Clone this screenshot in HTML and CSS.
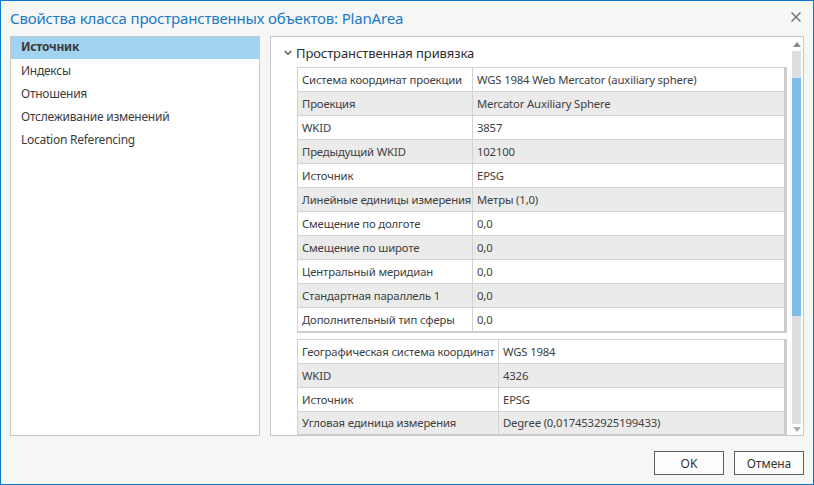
FILE: index.html
```html
<!DOCTYPE html>
<html lang="ru">
<head>
<meta charset="utf-8">
<title>Свойства класса пространственных объектов</title>
<link rel="stylesheet" href="styles.css">
</head>
<body>
<div class="window">
  <div class="titlebar">
    <div class="title">Свойства класса пространственных объектов: PlanArea</div>
    <svg class="close" width="10" height="10" viewBox="0 0 10 10"><path d="M0.5 0.5L9.5 9.5M9.5 0.5L0.5 9.5" stroke="#6b6b6b" stroke-width="1.3" fill="none"/></svg>
  </div>
  <div class="main">
    <div class="nav">
      <div class="nav-item selected">Источник</div>
      <div class="nav-item">Индексы</div>
      <div class="nav-item">Отношения</div>
      <div class="nav-item">Отслеживание изменений</div>
      <div class="nav-item">Location Referencing</div>
    </div>
    <div class="panel">
      <div class="content">
        <div class="section-head">
          <svg class="chev" width="8" height="6" viewBox="0 0 8 6"><path d="M0.8 1L4 4.2L7.2 1" stroke="#555" stroke-width="1.5" fill="none"/></svg>
          <span>Пространственная привязка</span>
        </div>
        <table class="grid g1">
          <tr><td class="k">Система координат проекции</td><td>WGS 1984 Web Mercator (auxiliary sphere)</td></tr>
          <tr class="alt"><td class="k">Проекция</td><td>Mercator Auxiliary Sphere</td></tr>
          <tr><td class="k">WKID</td><td>3857</td></tr>
          <tr class="alt"><td class="k">Предыдущий WKID</td><td>102100</td></tr>
          <tr><td class="k">Источник</td><td>EPSG</td></tr>
          <tr class="alt"><td class="k">Линейные единицы измерения</td><td>Метры (1,0)</td></tr>
          <tr><td class="k">Смещение по долготе</td><td>0,0</td></tr>
          <tr class="alt"><td class="k">Смещение по широте</td><td>0,0</td></tr>
          <tr><td class="k">Центральный меридиан</td><td>0,0</td></tr>
          <tr class="alt"><td class="k">Стандартная параллель 1</td><td>0,0</td></tr>
          <tr><td class="k">Дополнительный тип сферы</td><td>0,0</td></tr>
        </table>
        <table class="grid g2">
          <tr><td class="k">Географическая система координат</td><td>WGS 1984</td></tr>
          <tr class="alt"><td class="k">WKID</td><td>4326</td></tr>
          <tr><td class="k">Источник</td><td>EPSG</td></tr>
          <tr class="alt"><td class="k">Угловая единица измерения</td><td>Degree (0,0174532925199433)</td></tr>
        </table>
      </div>
      <div class="scrollbar">
        <div class="arrow up"></div>
        <div class="track"><div class="thumb"></div></div>
        <div class="arrow down"></div>
      </div>
    </div>
  </div>
  <div class="footer">
    <button class="btn">OK</button>
    <button class="btn">Отмена</button>
  </div>
</div>
</body>
</html>
```
FILE: styles.css
```css
* { box-sizing: border-box; }
html, body { margin: 0; padding: 0; }
body {
  font-family: "Noto Sans", "Open Sans", sans-serif;
  font-size: 11.3px;
  letter-spacing: -0.15px;
  color: #3c3c3c;
  background: #f5f7f7;
}
.window {
  width: 814px;
  height: 485px;
  border: 1px solid #0a78cf;
  background: #f5f7f7;
  display: flex;
  flex-direction: column;
}
.titlebar {
  height: 35px;
  display: flex;
  align-items: center;
  justify-content: space-between;
  padding: 0 12px 2px 9px;
}
.title {
  font-size: 15px;
  color: #1e79c3;
  letter-spacing: -0.18px;
}
.close { margin-top: -1px; }
.main {
  display: flex;
  gap: 10px;
  padding: 0 9px 0 9px;
  height: 400px;
}
.nav {
  width: 250px;
  border: 1px solid #c8c8c8;
  background: #fff;
}
.nav-item {
  height: 23px;
  line-height: 23px;
  padding-left: 10px;
  font-size: 12px;
  letter-spacing: -0.25px;
}
.nav-item.selected {
  background: #a2d4f2;
  font-weight: 700;
  color: #3a3a3a;
  height: 22px;
  line-height: 20px;
}
.panel {
  flex: 1;
  border: 1px solid #c8c8c8;
  background: #fff;
  display: flex;
  overflow: hidden;
}
.content {
  flex: 1;
  overflow: hidden;
  padding-left: 26px;
  padding-right: 2px;
}
.section-head {
  height: 30px;
  display: flex;
  align-items: center;
  margin-left: -13px;
  gap: 4px;
  font-size: 13px;
  letter-spacing: -0.1px;
  font-weight: 400;
  color: #2e2e2e;
  padding-top: 1px;
}
.grid {
  width: 100%;
  border-collapse: collapse;
  border: 1px solid #d2d2d2;
  border-right: 3px solid #cdcdcd;
  border-bottom: 2px solid #cdcdcd;
}
.grid td {
  height: 24px;
  padding: 0 0 0 4px;
  border-top: 1px solid #d2d2d2;
  border-left: 1px solid #d2d2d2;
  white-space: nowrap;
  color: #404040;
}
.grid tr.alt td { background: #ebebeb; }
.g1 .k { width: 175px; }
.g2 { margin-top: 6px; }
.g2 .k { width: 201px; }
.scrollbar {
  width: 14px;
  padding-right: 2px;
  display: flex;
  flex-direction: column;
  align-items: flex-end;
}
.arrow {
  width: 9px;
  height: 11px;
  display: flex;
  align-items: center;
  justify-content: center;
}
.arrow.up::after {
  content: "";
  border-left: 4px solid transparent;
  border-right: 4px solid transparent;
  border-bottom: 5px solid #8a8a8a;
}
.arrow.down::after {
  content: "";
  border-left: 4px solid transparent;
  border-right: 4px solid transparent;
  border-top: 5px solid #b0b0b0;
}
.arrow.up { margin-top: 2px; }
.track {
  flex: 1;
  width: 9px;
  background: #dedede;
  margin-top: 1px;
  padding-top: 27px;
  padding-bottom: 108px;
  display: flex;
}
.thumb {
  flex: 1;
  background: #7bbce8;
}
.footer {
  flex: 1;
  display: flex;
  justify-content: flex-end;
  align-items: flex-start;
  gap: 10px;
  padding: 15px 9px 0 0;
}
.btn {
  width: 70px;
  height: 24px;
  background: #fdfdfd;
  border: 1px solid #5f5f5f;
  font-family: "Noto Sans", "Open Sans", sans-serif;
  font-size: 12px;
  color: #333;
  padding: 0;
}
```
